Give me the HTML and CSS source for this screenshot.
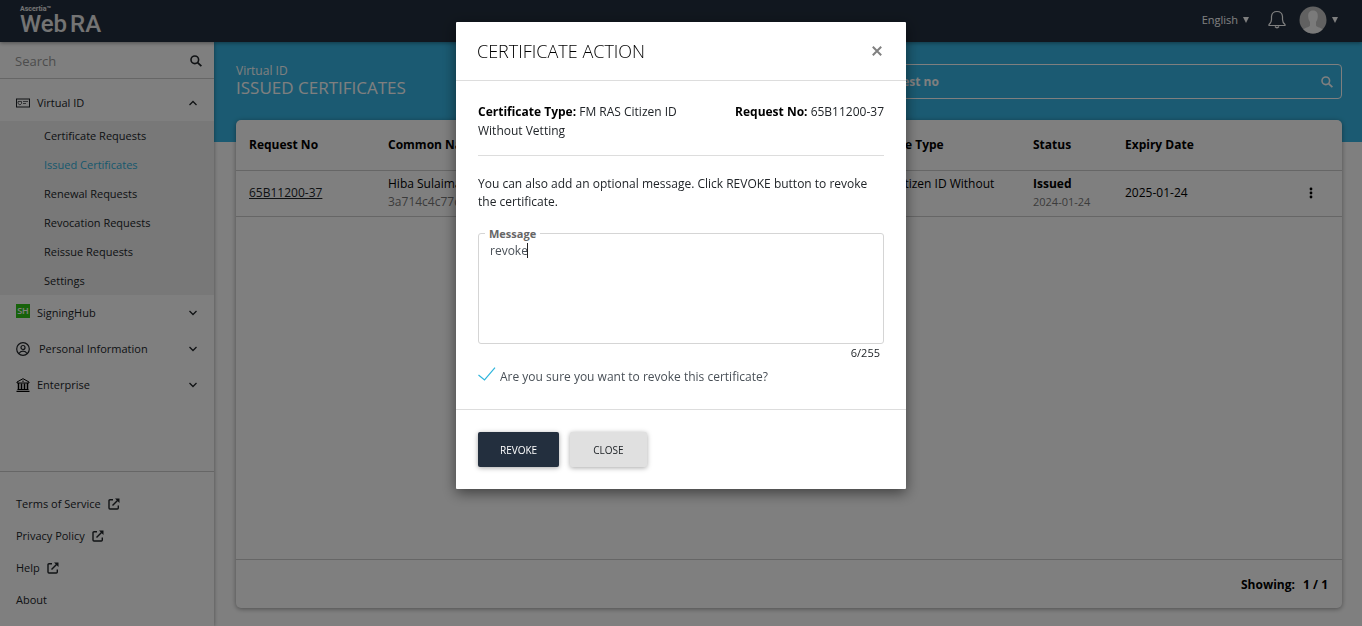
FILE: index.html
```html
<!DOCTYPE html>
<html lang="en">
<head>
    <meta charset="UTF-8">
    <meta name="viewport" content="width=device-width, initial-scale=1">
    <title>Web RA - Issued Certificates</title>
    <link rel="stylesheet" href="styles.css">
</head>
<body>
    <!-- shared icons -->
    <svg class="sprite" aria-hidden="true">
        <symbol id="icon-search" viewBox="0 0 12 12">
            <circle cx="4.8" cy="4.8" r="3.8" fill="none" stroke="currentColor" stroke-width="1.6"/>
            <path d="M7.6 7.6L11.4 11.2" fill="none" stroke="currentColor" stroke-width="1.8"/>
        </symbol>
        <symbol id="icon-down" viewBox="0 0 10 6">
            <path d="M1.5 1L5 4.5L8.500 1" fill="none" stroke="currentColor" stroke-width="1.3"/>
        </symbol>
        <symbol id="icon-up" viewBox="0 0 10 6">
            <path d="M1.500 5L5 1.500L8.500 5" fill="none" stroke="currentColor" stroke-width="1.3"/>
        </symbol>
        <symbol id="icon-external" viewBox="0 0 12 12">
            <path d="M5 1.700H2Q1 1.700 1 2.700V10Q1 11 2 11H9.300Q10.300 11 10.300 10V7.500" fill="none" stroke="currentColor" stroke-width="1.400"/>
            <path d="M4.500 7.500L10.500 1.500" fill="none" stroke="currentColor" stroke-width="1.400"/>
            <path d="M7 0.500H11.500V5Z" fill="currentColor"/>
        </symbol>
    </svg>

    <header class="topbar">
        <a href="#" class="logo">
            <span class="logo-small">Ascertia™</span>
            <span class="logo-name">Web<span>RA</span></span>
        </a>
        <div class="topbar-right">
            <button type="button" class="language">English <span class="caret-down"></span></button>
            <button type="button" class="bell" aria-label="Notifications">
                <svg viewBox="0 0 18 19" width="18" height="19">
                    <path d="M1 15.500V14.500Q3.500 12.500 3.500 9.500V6.500Q4 1.500 9 1.500Q14 1.500 14.500 6.500V9.500Q14.500 12.500 17 14.500V15.500Z" fill="none" stroke="currentColor" stroke-width="1.200"/>
                    <path d="M7 16.500Q9 19 11 16.500" fill="none" stroke="currentColor" stroke-width="1.300"/>
                </svg>
            </button>
            <button type="button" class="user" aria-label="Account">
                <svg viewBox="0 0 28 28" width="28" height="28">
                    <defs><clipPath id="round"><circle cx="14" cy="14" r="13.500"/></clipPath></defs>
                    <g clip-path="url(#round)">
                        <rect width="28" height="28" fill="#c2c2c2"/>
                        <path d="M14 4.500C17.500 4.500 19 7 18.800 10.500C18.700 13 18 14.500 17 16V19.500C18 21.500 22.500 21.500 24 24V28H4V24C5.500 21.500 10 21.500 11 19.500V16C10 14.500 9.300 13 9.200 10.500C9 7 10.500 4.500 14 4.500Z" fill="#f4f4f4"/>
                    </g>
                </svg>
                <span class="caret-down"></span>
            </button>
        </div>
    </header>

    <div class="layout">
        <aside class="sidebar">
            <div class="side-search">
                <input type="text" placeholder="Search" aria-label="Search menu">
                <svg class="icon-12"><use href="#icon-search"/></svg>
            </div>
            <nav class="menu">
                <a href="#" class="menu-item open">
                    <svg class="menu-icon" viewBox="0 0 14 14">
                        <rect x="0.500" y="3" width="13" height="8" fill="none" stroke="currentColor"/>
                        <path d="M2 5.500H5.500V7.500L4 9L2 7.500ZM7 5.500H12M7 7.500H10" fill="none" stroke="currentColor" stroke-width="0.700"/>
                    </svg>
                    <span>Virtual ID</span>
                    <svg class="chevron"><use href="#icon-up"/></svg>
                </a>
                <div class="submenu">
                    <a href="#">Certificate Requests</a>
                    <a href="#" class="active">Issued Certificates</a>
                    <a href="#">Renewal Requests</a>
                    <a href="#">Revocation Requests</a>
                    <a href="#">Reissue Requests</a>
                    <a href="#">Settings</a>
                </div>
                <a href="#" class="menu-item">
                    <span class="sh-icon">SH</span>
                    <span>SigningHub</span>
                    <svg class="chevron"><use href="#icon-down"/></svg>
                </a>
                <a href="#" class="menu-item">
                    <svg class="menu-icon" viewBox="0 0 14 14">
                        <circle cx="7" cy="7" r="6.300" fill="none" stroke="currentColor" stroke-width="1.200"/>
                        <circle cx="7" cy="5.500" r="2" fill="none" stroke="currentColor" stroke-width="1.200"/>
                        <path d="M3 11.500Q4.200 9.200 7 9.200Q9.800 9.200 11 11.500" fill="none" stroke="currentColor" stroke-width="1.200"/>
                    </svg>
                    <span class="wide">Personal Information</span>
                    <svg class="chevron"><use href="#icon-down"/></svg>
                </a>
                <a href="#" class="menu-item">
                    <svg class="menu-icon black" viewBox="0 0 14 14">
                        <path d="M1 4L7 0.700L13 4V5H1Z" fill="none" stroke="currentColor"/>
                        <path d="M2.500 5V11.500M5.500 5.500V11M8.500 5.500V11M11.500 5V11.500" stroke="currentColor" stroke-width="1.500"/>
                        <path d="M1.500 11.500H12.500M0.500 13.300H13.500" stroke="currentColor" stroke-width="1.200"/>
                        <circle cx="7" cy="3.200" r="0.700" fill="currentColor"/>
                    </svg>
                    <span>Enterprise</span>
                    <svg class="chevron"><use href="#icon-down"/></svg>
                </a>
            </nav>
            <div class="side-links">
                <a href="#">Terms of Service <svg class="icon-12"><use href="#icon-external"/></svg></a>
                <a href="#">Privacy Policy <svg class="icon-12"><use href="#icon-external"/></svg></a>
                <a href="#">Help <svg class="icon-12"><use href="#icon-external"/></svg></a>
                <a href="#">About</a>
            </div>
        </aside>

        <main class="content">
            <div class="hero">
                <div class="page-title">
                    <p>Virtual ID</p>
                    <h1>Issued Certificates</h1>
                </div>
                <div class="hero-search">
                    <input type="text" placeholder="Search by request no" aria-label="Search by request no">
                    <svg class="icon-12"><use href="#icon-search"/></svg>
                </div>
            </div>
            <section class="card">
                <table>
                    <colgroup>
                        <col class="col-no">
                        <col>
                        <col class="col-type">
                        <col class="col-status">
                        <col class="col-date">
                        <col class="col-menu">
                    </colgroup>
                    <thead>
                        <tr>
                            <th>Request No</th>
                            <th>Common Name</th>
                            <th>Certificate Type</th>
                            <th>Status</th>
                            <th>Expiry Date</th>
                            <th></th>
                        </tr>
                    </thead>
                    <tbody>
                        <tr>
                            <td><a href="#">65B11200-37</a></td>
                            <td>Hiba Sulaiman<div class="muted">3a714c4c77d</div></td>
                            <td>FM RAS Citizen ID Without Vetting</td>
                            <td><b>Issued</b><div class="muted small">2024-01-24</div></td>
                            <td>2025-01-24</td>
                            <td>
                                <button type="button" class="dots" aria-label="Row actions">
                                    <svg viewBox="0 0 4 12" width="4" height="12"><circle cx="2" cy="2" r="1.400"/><circle cx="2" cy="6" r="1.400"/><circle cx="2" cy="10" r="1.400"/></svg>
                                </button>
                            </td>
                        </tr>
                    </tbody>
                </table>
                <div class="card-footer">Showing: <span>1 / 1</span></div>
            </section>
        </main>
    </div>

    <div class="backdrop">
        <div class="modal" role="dialog" aria-modal="true" aria-labelledby="modalTitle">
            <div class="modal-header">
                <h2 id="modalTitle">Certificate Action</h2>
                <button type="button" class="modal-close" aria-label="Close dialog">
                    <svg viewBox="0 0 10 10" width="10" height="10"><path d="M0.800 0.800L9.200 9.200M9.200 0.800L0.800 9.200" stroke="currentColor" stroke-width="2"/></svg>
                </button>
            </div>
            <form class="modal-body">
                <div class="summary">
                    <p class="summary-type"><b>Certificate Type:</b> FM RAS Citizen ID Without Vetting</p>
                    <p><b>Request No:</b> 65B11200-37</p>
                </div>
                <p class="hint">You can also add an optional message. Click REVOKE button to revoke the certificate.</p>
                <div class="message">
                    <label for="message">Message</label>
                    <textarea id="message" maxlength="255">revoke</textarea>
                    <span class="text-cursor"></span>
                </div>
                <div class="counter">6/255</div>
                <label class="confirm">
                    <input type="checkbox" checked>
                    <svg viewBox="0 0 18 14" width="18" height="14"><path d="M0.500 8L6.500 13L17 0.700" fill="none" stroke="currentColor" stroke-width="1.200"/></svg>
                    <span>Are you sure you want to revoke this certificate?</span>
                </label>
            </form>
            <div class="modal-footer">
                <button type="button" class="btn btn-dark">REVOKE</button>
                <button type="button" class="btn btn-light">CLOSE</button>
            </div>
        </div>
    </div>
</body>
</html>
```
FILE: styles.css
```css
* {
    box-sizing: border-box;
}

body {
    margin: 0;
    min-height: 100vh;
    display: flex;
    flex-direction: column;
    font-family: "Open Sans", "Noto Sans", sans-serif;
    font-size: 12px;
    line-height: 18px;
    color: #212529;
    background: #fff;
}

h1, h2, p {
    margin: 0;
    font-weight: 400;
}

a {
    color: inherit;
    text-decoration: none;
}

button, input, textarea {
    font: inherit;
    color: inherit;
    border: 0;
    padding: 0;
    background: none;
}

.sprite {
    display: none;
}

.icon-12 {
    width: 12px;
    height: 12px;
}

/* top bar */
.topbar {
    display: flex;
    justify-content: space-between;
    height: 42px;
    padding: 0 24px 0 20px;
    background: #232f3e;
    color: #fff;
    position: relative;
    z-index: 2;
    box-shadow: 0 1px 4px rgba(0, 0, 0, 0.4);
}

.logo {
    display: flex;
    flex-direction: column;
    padding-top: 5px;
    font-family: Roboto, sans-serif;
    color: #e8e8e8;
}

.logo-small {
    font-size: 7px;
    line-height: 8px;
    font-weight: 700;
}

.logo-name {
    font-size: 24px;
    line-height: 23px;
    font-weight: 500;
}

.logo-name span {
    margin-left: 3px;
}

.topbar-right {
    display: flex;
    align-items: center;
    height: 39px;
}

.language {
    display: flex;
    align-items: center;
    gap: 5px;
    font-size: 11px;
}

.caret-down {
    border: 3px solid transparent;
    border-top: 6px solid #fff;
    border-bottom: 0;
}

.bell {
    display: flex;
    margin: 0 13px 0 19px;
}

.user {
    display: flex;
    align-items: center;
    gap: 5px;
}

/* sidebar */
.layout {
    flex: 1;
    display: flex;
}

.sidebar {
    width: 214px;
    flex-shrink: 0;
    display: flex;
    flex-direction: column;
    background: #fff;
    font-size: 11px;
    position: relative;
    z-index: 1;
    box-shadow: 0 0 4px rgba(0, 0, 0, 0.4);
}

.side-search {
    display: flex;
    align-items: center;
    height: 37px;
    padding: 2px 12px 0 15px;
    border-bottom: 1px solid #ccc;
}

.side-search input {
    flex: 1;
    min-width: 0;
    font-size: 13px;
}

.side-search input::placeholder {
    color: #999;
    opacity: 1;
}

.menu {
    flex: 1;
    padding-top: 6px;
}

.menu-item {
    display: flex;
    align-items: center;
    height: 36px;
    padding: 0 16px;
    gap: 7px;
}

.menu-icon {
    width: 14px;
    height: 14px;
}

.menu-icon.black {
    color: #000;
}

.sh-icon {
    width: 14px;
    height: 14px;
    margin-bottom: 4px;
    background: #2fc414;
    color: #fff;
    font-size: 9px;
    line-height: 13px;
    font-weight: 600;
    text-align: center;
}

.wide {
    padding-left: 2px;
}

.chevron {
    width: 10px;
    height: 6px;
    margin-left: auto;
}

.submenu {
    background: #f1f1f1;
}

.submenu a {
    display: block;
    padding-left: 44px;
    line-height: 29px;
}

.submenu .active {
    color: #2fb0dc;
}

.side-links {
    padding: 16px 16px 10px;
    border-top: 1px solid #ccc;
}

.side-links a {
    display: flex;
    align-items: center;
    gap: 7px;
    height: 32px;
}

/* main area */
.content {
    flex: 1;
    min-width: 0;
    display: flex;
    flex-direction: column;
}

.hero {
    display: flex;
    justify-content: space-between;
    height: 100px;
    padding: 20px 20px 0 22px;
    background: #36b5e4;
    color: #fff;
}

.page-title h1 {
    font-size: 17px;
    line-height: 16px;
    text-transform: uppercase;
}

.hero-search {
    display: flex;
    align-items: center;
    width: 550px;
    height: 35px;
    margin-top: 2px;
    padding: 0 8px 0 20px;
    border: 1px solid #fff;
    border-radius: 4px;
}

.hero-search input {
    flex: 1;
    font-weight: 700;
}

.hero-search input::placeholder {
    color: #fff;
    opacity: 1;
}

.card {
    flex: 1;
    display: flex;
    flex-direction: column;
    justify-content: space-between;
    margin: -22px 20px 18px 22px;
    background: #fff;
    border-radius: 5px;
    box-shadow: 0 1px 5px rgba(0, 0, 0, 0.4);
}

table {
    width: 100%;
    table-layout: fixed;
    border-collapse: collapse;
}

.col-no {
    width: 139px;
}

.col-type {
    width: 184px;
}

.col-status {
    width: 92px;
}

.col-date {
    width: 184px;
}

.col-menu {
    width: 46px;
}

th {
    height: 50px;
    padding: 0 13px;
    text-align: left;
    color: #000;
    border-bottom: 1px solid #ccc;
}

td {
    height: 46px;
    padding: 4px 13px 5px;
    border-bottom: 1px solid #ccc;
    color: #000;
}

td a {
    text-decoration: underline;
    color: #212529;
}

.muted {
    color: #777;
}

.small {
    font-size: 11px;
}

.dots {
    display: flex;
}

.card-footer {
    padding: 16px 14px 14px;
    border-top: 1px solid #ccc;
    text-align: right;
    font-weight: 700;
    color: #000;
}

.card-footer span {
    margin-left: 5px;
}

/* modal */
.backdrop {
    position: fixed;
    inset: 0;
    z-index: 10;
    display: flex;
    justify-content: center;
    align-items: flex-start;
    padding-top: 22px;
    background: rgba(0, 0, 0, 0.5);
}

.modal {
    width: 450px;
    background: #fff;
    box-shadow: 0 4px 14px rgba(0, 0, 0, 0.5);
    border-radius: 1px;
}

.modal-header {
    display: flex;
    justify-content: space-between;
    align-items: center;
    height: 59px;
    padding: 0 24px 0 21px;
    border-bottom: 1px solid #ddd;
}

.modal-header h2 {
    font-size: 18px;
    font-weight: 300;
    text-transform: uppercase;
    color: #000;
}

.modal-close {
    display: flex;
    color: #808080;
}

.modal-body {
    padding: 21px 22px 23px;
}

.summary {
    display: flex;
    justify-content: space-between;
    padding-bottom: 15px;
    border-bottom: 1px solid #ddd;
    line-height: 19px;
}

.summary b {
    color: #000;
}

.summary-type {
    width: 216px;
}

.hint {
    padding: 19px 0 22px;
}

.message {
    position: relative;
    display: flex;
}

.message label {
    position: absolute;
    top: -8px;
    left: 7px;
    padding: 0 4px;
    background: #fff;
    color: #666;
    font-size: 11px;
    font-weight: 700;
}

.message textarea {
    width: 100%;
    height: 111px;
    padding: 8px 11px;
    border: 1px solid #d5d5d5;
    border-radius: 3px;
    color: #495057;
    resize: none;
    outline: 0;
}

.text-cursor {
    position: absolute;
    top: 10px;
    left: 49px;
    width: 1px;
    height: 15px;
    background: #222;
}

.counter {
    padding-right: 4px;
    text-align: right;
    font-size: 11px;
}

.confirm {
    position: relative;
    display: flex;
    align-items: flex-start;
    gap: 4px;
    margin-top: 5px;
    line-height: 19px;
    color: #495057;
}

.confirm input {
    position: absolute;
    width: 18px;
    height: 14px;
    margin: 0;
    opacity: 0;
}

.confirm svg {
    color: #2fb5dc;
}

.modal-footer {
    display: flex;
    gap: 11px;
    padding: 22px;
    border-top: 1px solid #ddd;
}

.btn {
    height: 35px;
    padding: 0 23px;
    border-radius: 2px;
    font-size: 10px;
    line-height: 14px;
    box-shadow: 0 1px 5px rgba(0, 0, 0, 0.35);
    cursor: pointer;
}

.btn-dark {
    padding: 0 22px;
    background: #232f3e;
    color: #fff;
}

.btn-light {
    background: #e0e0e0;
    color: #212529;
}
```
